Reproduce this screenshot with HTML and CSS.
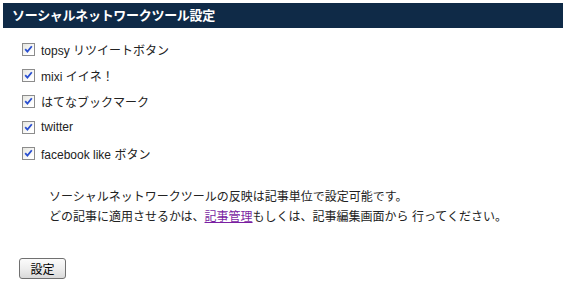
FILE: index.html
```html
<!DOCTYPE html>
<html lang="ja">
<head>
<meta charset="utf-8">
<title>ソーシャルネットワークツール設定</title>
<link rel="stylesheet" href="styles.css">
</head>
<body>
<div class="page">
  <h1 class="title">ソーシャルネットワークツール設定</h1>
  <ul class="options">
    <li class="option"><span class="box"><svg viewBox="0 0 11 11" width="11" height="11"><path d="M2.2 5.2 L4.4 7.6 L8.8 2.2" fill="none" stroke="#2a4fd0" stroke-width="1.8"/></svg></span>topsy リツイートボタン</li>
    <li class="option"><span class="box"><svg viewBox="0 0 11 11" width="11" height="11"><path d="M2.2 5.2 L4.4 7.6 L8.8 2.2" fill="none" stroke="#2a4fd0" stroke-width="1.8"/></svg></span>mixi イイネ！</li>
    <li class="option"><span class="box"><svg viewBox="0 0 11 11" width="11" height="11"><path d="M2.2 5.2 L4.4 7.6 L8.8 2.2" fill="none" stroke="#2a4fd0" stroke-width="1.8"/></svg></span>はてなブックマーク</li>
    <li class="option"><span class="box"><svg viewBox="0 0 11 11" width="11" height="11"><path d="M2.2 5.2 L4.4 7.6 L8.8 2.2" fill="none" stroke="#2a4fd0" stroke-width="1.8"/></svg></span>twitter</li>
    <li class="option"><span class="box"><svg viewBox="0 0 11 11" width="11" height="11"><path d="M2.2 5.2 L4.4 7.6 L8.8 2.2" fill="none" stroke="#2a4fd0" stroke-width="1.8"/></svg></span>facebook like ボタン</li>
  </ul>
  <p class="note">ソーシャルネットワークツールの反映は記事単位で設定可能です。<br>どの記事に適用させるかは、<a class="link" href="#">記事管理</a>もしくは、記事編集画面から 行ってください。</p>
  <button class="btn" type="button">設定</button>
</div>
</body>
</html>
```
FILE: styles.css
```css
html, body {
  margin: 0;
  padding: 0;
  background: #ffffff;
}
body {
  font-family: "Liberation Sans", "Noto Sans CJK JP", sans-serif;
  font-size: 12px;
  color: #222222;
}
.page {
  padding: 3px 1px 0 3px;
}
.title {
  margin: 0;
  height: 25px;
  line-height: 25px;
  padding-left: 9px;
  background: #0f2a47;
  color: #ffffff;
  font-size: 13px;
  font-weight: bold;
  letter-spacing: -0.3px;
}
.options {
  list-style: none;
  margin: 8px 0 0 0;
  padding: 0 0 0 19px;
}
.option {
  height: 26px;
  display: flex;
  align-items: center;
}
.box {
  width: 11px;
  height: 11px;
  border: 1px solid #8c8c8c;
  background: linear-gradient(135deg, #e6e6e0 0%, #ffffff 80%);
  margin-right: 6px;
  display: flex;
  flex: none;
}
.note {
  margin: 21px 0 0 46px;
  line-height: 20px;
}
.link {
  color: #7b1fa2;
  text-decoration: underline;
}
.btn {
  margin: 31px 0 0 16px;
  width: 47px;
  height: 21px;
  padding: 0;
  border: 1px solid #707070;
  border-radius: 3px;
  background: linear-gradient(#fbfbfb 0%, #eeeeee 50%, #d9d9d9 100%);
  font-family: "Liberation Sans", "Noto Sans CJK JP", sans-serif;
  font-size: 12px;
  color: #000000;
  display: block;
}
```
